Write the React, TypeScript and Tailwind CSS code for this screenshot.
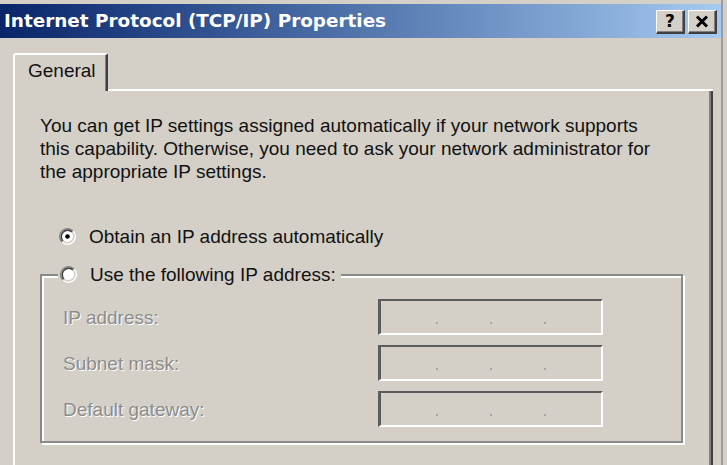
import React from "react";

// classic win2k style radio, drawn on a 12px grid and scaled up
function Radio({ checked }: { checked?: boolean }) {
  return (
    <svg width="17" height="17" viewBox="0 0 12 12" className="shrink-0">
      <circle cx="6" cy="6" r="4.2" fill="#ffffff" />
      <path d="M2.11 9.89 A5.5 5.5 0 0 1 9.89 2.11" fill="none" stroke="#808080" strokeWidth="1" />
      <path d="M9.89 2.11 A5.5 5.5 0 0 1 2.11 9.89" fill="none" stroke="#ffffff" strokeWidth="1" />
      <path d="M2.82 9.18 A4.5 4.5 0 0 1 9.18 2.82" fill="none" stroke="#404040" strokeWidth="1" />
      <path d="M9.18 2.82 A4.5 4.5 0 0 1 2.82 9.18" fill="none" stroke="#d4d0c8" strokeWidth="1" />
      {checked && <circle cx="6" cy="6" r="1.6" fill="#000000" />}
    </svg>
  );
}

function CaptionButton({ children }: { children: React.ReactNode }) {
  return (
    <div className="w-[29px] h-[24px] bg-[#d4d0c8] border-t border-l border-t-white border-l-white border-r-2 border-b-2 border-r-[#404040] border-b-[#404040] shadow-[inset_-1px_-1px_0_#808080] flex items-center justify-center">
      {children}
    </div>
  );
}

function IpBox() {
  return (
    <div className="w-[225px] h-[36px] border-t-2 border-l-[3px] border-t-[#5c5c5c] border-l-[#5c5c5c] border-b-2 border-r-2 border-b-white border-r-white bg-[#d4d0c8] flex items-start pt-[21px] pl-[55px] gap-[52px]">
      <div className="w-[2px] h-[2px] bg-[#a4a4a4]" />
      <div className="w-[2px] h-[2px] bg-[#a4a4a4]" />
      <div className="w-[2px] h-[2px] bg-[#a4a4a4]" />
    </div>
  );
}

const fields = ["IP address:", "Subnet mask:", "Default gateway:"];

export default function App() {
  return (
    <div className="w-[727px] h-[465px] overflow-hidden bg-[#d4d0c8] flex font-['Liberation_Sans',Arial,sans-serif] text-[19px] leading-[23px] text-[#111]">
      <div className="w-[721px] flex flex-col pt-[4px]">
        {/* Title bar */}
        <div className="h-[34px] shrink-0 flex items-start bg-gradient-to-r from-[#0a246a] to-[#a6caf0] pl-[4px] pr-[4px]">
          <span className="flex-1 pt-[6px] text-white font-bold text-[18.4px] leading-[22px] font-['DejaVu_Sans',Verdana,sans-serif]">
            Internet Protocol (TCP/IP) Properties
          </span>
          <div className="flex gap-[3px] pt-[6px]">
            <CaptionButton>
              <span className="font-['DejaVu_Sans',sans-serif] font-bold text-[17px] leading-none text-black">?</span>
            </CaptionButton>
            <CaptionButton>
              <svg width="14" height="13" viewBox="0 0 14 13">
                <path d="M2 1.5 L12 11.5 M12 1.5 L2 11.5" stroke="#000" strokeWidth="3" />
              </svg>
            </CaptionButton>
          </div>
        </div>

        {/* Tabs + page */}
        <div className="flex-1 flex flex-col pt-[15px] pl-[13px] pr-[8px]">
          <div className="flex items-end h-[38px]">
            <div className="w-[95px] h-full border-t-2 border-l-2 border-t-white border-l-white border-r-2 border-r-[#404040] shadow-[inset_-1px_0_0_#808080] rounded-tl-[3px] rounded-tr-[2px] pl-[13px] pt-[4px]">
              General
            </div>
            <div className="flex-1 border-b-2 border-b-white" />
          </div>

          <div className="flex-1 border-l-2 border-l-white border-r-2 border-r-[#404040] shadow-[inset_-2px_0_0_#808080] pt-[23px] pl-[25px]">
            <p className="w-[615px]">
              You can get IP settings assigned automatically if your network supports this capability. Otherwise, you need to ask your network administrator for the appropriate IP settings.
            </p>

            <div className="mt-[42px] ml-[19px] flex items-center gap-[13px]">
              <Radio checked />
              <span>Obtain an IP address automatically</span>
            </div>

            <fieldset className="mt-[15px] w-[643px] border-2 border-[#8a8a8a] shadow-[2px_2px_0_#fff,inset_2px_2px_0_#fff] px-0 pt-[13px] pb-[14px]">
              <legend className="ml-[16px] pl-[2px] pr-[5px] bg-[#d4d0c8] flex items-center gap-[13px]">
                <Radio />
                <span>Use the following IP address:</span>
              </legend>
              <div className="flex flex-col gap-[10px]">
                {fields.map((f) => (
                  <div key={f} className="flex items-center pl-[21px]">
                    <span className="w-[315px] text-[#8c8c8c] [text-shadow:1px_1px_0_#ffffff]">{f}</span>
                    <IpBox />
                  </div>
                ))}
              </div>
            </fieldset>
          </div>
        </div>
      </div>
      <div className="w-[2px] bg-[#9c9c9c]" />
      <div className="flex-1" />
    </div>
  );
}
